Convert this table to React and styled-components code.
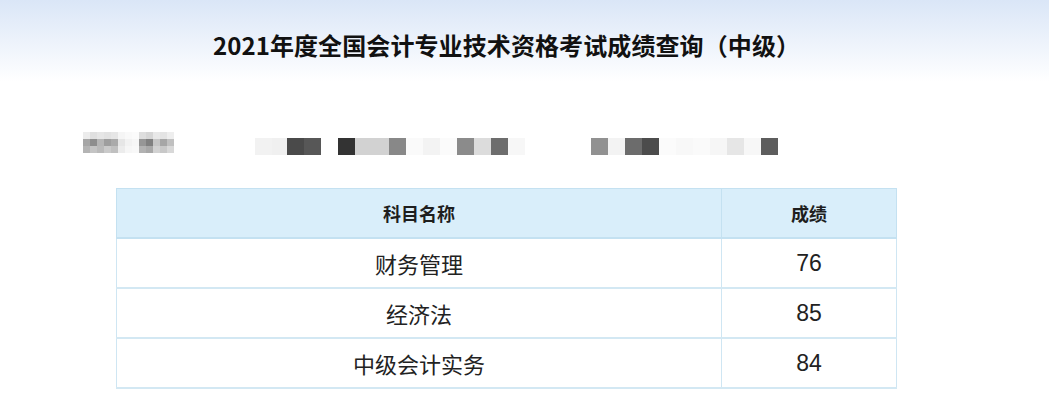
import React from "react";
import styled, { createGlobalStyle } from "styled-components";

const GlobalStyle = createGlobalStyle`
  html, body {
    margin: 0;
    padding: 0;
    background: #fff;
  }
  body {
    font-family: "Noto Sans CJK SC", "Noto Sans", sans-serif;
    color: #222;
  }
`;

const Page = styled.div`
  width: 1049px;
  height: 419px;
  overflow: hidden;
  background: linear-gradient(to bottom, #dae6f7 0px, #ecf2fb 40px, #ffffff 82px) no-repeat;
`;

const Header = styled.header`
  display: flex;
  justify-content: center;
  padding: 30px 36px 0 0;
`;

const Title = styled.h1`
  margin: 0;
  font-size: 24px;
  line-height: 30px;
  font-weight: 700;
  letter-spacing: 0.1px;
  color: #111;
`;

const InfoRow = styled.div`
  display: flex;
  align-items: flex-start;
  gap: 80px;
  margin-top: 72px;
  padding-left: 83px;
  height: 26px;
`;

const Mosaic = styled.svg`
  display: block;
  flex: none;
`;

const TableWrap = styled.div`
  margin: 30px 0 0 116px;
  width: 781px;
`;

const Table = styled.table`
  width: 100%;
  border-collapse: collapse;
  border: 1px solid #c9e3f1;
  table-layout: fixed;
`;

const HeadCell = styled.th`
  height: 48px;
  padding: 0;
  background: #d9eefa;
  border: 1px solid #c4e1f1;
  border-bottom: 2px solid #c4e1f1;
  font-size: 18px;
  font-weight: 700;
  color: #1e1e1e;
  text-align: center;
  width: ${(p) => p.$w || "auto"};
`;

const Cell = styled.td`
  height: 48px;
  padding: 0;
  border: 1px solid #cfe6f3;
  border-bottom: 2px solid #d3e8f3;
  font-size: 22px;
  color: #222;
  text-align: center;
  background: #fff;
`;

const Num = styled(Cell)`
  font-family: "Liberation Sans", "Noto Sans", sans-serif;
  font-size: 23px;
`;

// blurred label, 7px cells
const labelCells = [
  ["#ececec", "#e0e0e0", "#e6e6e6", "#e2e2e2", "#e6e6e6", "#f5f5f5", "#f9f9f9", "#fbfbfb", "#dedede", "#d6d6d6", "#e8e8e8", "#e4e4e4", "#eeeeee"],
  ["#a6a6a6", "#8e8e8e", "#b6b6b6", "#9e9e9e", "#aaaaaa", "#e6e6e6", "#f2f2f2", "#f6f6f6", "#969696", "#808080", "#c6c6c6", "#a6a6a6", "#c0c0c0"],
  ["#b4b4b4", "#c4c4c4", "#bababa", "#cacaca", "#c0c0c0", "#ececec", "#f6f6f6", "#f8f8f8", "#b2b2b2", "#a8a8a8", "#d2d2d2", "#c8c8c8", "#d8d8d8"],
];

// redacted value, 17px blocks [x offset, colour]
const valueBlocks = [
  [0, "#f2f2f2"], [17, "#f0f0f0"], [32, "#4a4a4a"], [49, "#575757"],
  [83, "#333333"], [100, "#d2d2d2"], [117, "#d2d2d2"], [134, "#888888"],
  [151, "#fafafa"], [168, "#f3f3f3"], [185, "#fbfbfb"], [202, "#8b8b8b"],
  [219, "#dcdcdc"], [236, "#6d6d6d"], [253, "#f7f7f7"],
  [336, "#919191"], [353, "#f3f3f3"], [370, "#6c6c6c"], [387, "#4c4c4c"],
  [404, "#fbfbfb"], [421, "#f8f8f8"], [438, "#fafafa"], [455, "#f6f6f6"],
  [472, "#e6e6e6"], [489, "#f7f7f7"], [506, "#5d5d5d"],
];

const rows = [
  { name: "财务管理", score: 76 },
  { name: "经济法", score: 85 },
  { name: "中级会计实务", score: 84 },
];

function LabelMosaic() {
  return (
    <Mosaic width="92" height="24" viewBox="0 0 92 24">
      {labelCells.map((row, r) =>
        row.map((c, i) => (
          <rect key={r + "-" + i} x={i * 7} y={r * 7} width="7" height="7" fill={c} />
        ))
      )}
    </Mosaic>
  );
}

function ValueMosaic() {
  return (
    <Mosaic width="524" height="24" viewBox="0 0 524 24">
      {valueBlocks.map(([x, c]) => (
        <rect key={x} x={x} y="6" width="17" height="17" fill={c} />
      ))}
    </Mosaic>
  );
}

export default function App() {
  return (
    <>
      <GlobalStyle />
      <Page>
        <Header>
          <Title>2021年度全国会计专业技术资格考试成绩查询（中级）</Title>
        </Header>
        <InfoRow>
          <LabelMosaic />
          <ValueMosaic />
        </InfoRow>
        <TableWrap>
          <Table>
            <thead>
              <tr>
                <HeadCell $w="604px">科目名称</HeadCell>
                <HeadCell>成绩</HeadCell>
              </tr>
            </thead>
            <tbody>
              {rows.map((r) => (
                <tr key={r.name}>
                  <Cell>{r.name}</Cell>
                  <Num>{r.score}</Num>
                </tr>
              ))}
            </tbody>
          </Table>
        </TableWrap>
      </Page>
    </>
  );
}
